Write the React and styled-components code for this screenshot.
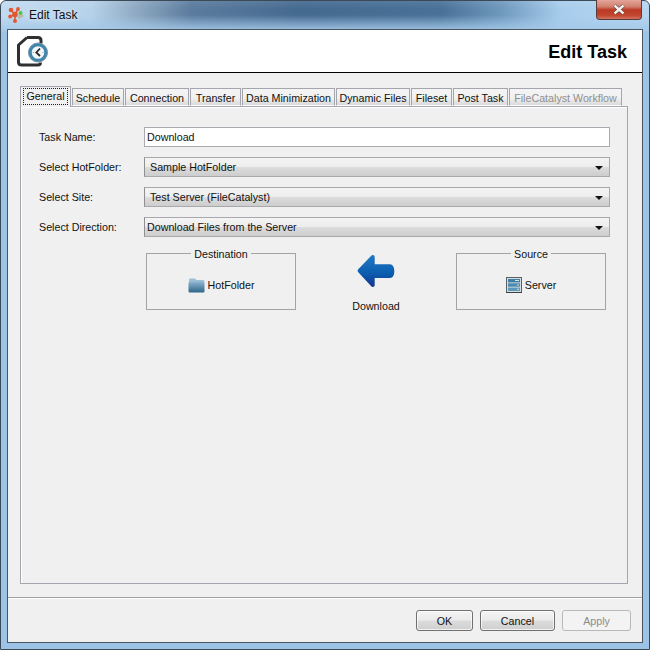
import React from "react";
import styled, { createGlobalStyle } from "styled-components";

const Global = createGlobalStyle`
  html, body { margin: 0; padding: 0; background: #fff; }
  #root { width: 650px; height: 650px; overflow: hidden; }
  * { box-sizing: border-box; }
`;

const UI = `"Liberation Sans", Arial, sans-serif`;

const Win = styled.div`
  width: 650px; height: 650px;
  display: flex; flex-direction: column;
  padding: 0 6px 6px;
  border-radius: 6px 6px 0 0;
  border: 1px solid #3c4a58;
  background:
    linear-gradient(180deg, rgba(255,255,255,0.08) 0, rgba(255,255,255,0) 8px, rgba(170,205,235,0) 14px, rgba(164,201,233,0.9) 29px, #9dc3e6 32px),
    linear-gradient(90deg, #c3dbf0 0, #b6d2ea 90px, #8fa9c2 135px, #5b7c9e 190px, #456a90 300px, #4a7198 440px, #6f98bd 500px, #a8cdec 560px, #b6d6f0 100%);
  font-family: ${UI};
  font-size: 10.7px;
  color: #111;
`;

const TitleBar = styled.div`
  height: 28px; flex: none;
  display: flex; align-items: flex-start;
  margin-left: 1px;
`;
const AppIcon = styled.svg`width: 16px; height: 16px; margin-top: 6px; flex: none;`;
const TitleText = styled.div`
  margin: 6px 0 0 5px; font-size: 12px; line-height: 17px; color: #111;
  text-shadow: 0 0 6px rgba(255,255,255,0.8);
`;
const CloseBtn = styled.div`
  margin-left: auto; margin-right: 1px; margin-top: -1px;
  width: 46px; height: 20px;
  border: 1px solid #5a3a3a; border-top: 0; border-radius: 0 0 4px 4px;
  background: linear-gradient(180deg, #e2a69a 0, #d2806f 35%, #bb3a24 52%, #c2452d 80%, #d2745f 100%);
  display: flex; align-items: center; justify-content: center;
`;

const Client = styled.div`
  flex: 1; min-height: 0; display: flex; flex-direction: column;
  background: #f0f0f0; border: 1px solid #4b5560;
`;
const Header = styled.div`
  height: 43px; flex: none; background: #fff;
  border-bottom: 1px solid #000;
  display: flex; align-items: center; justify-content: space-between;
  padding: 0 15px 0 8px;
`;
const HeaderTitle = styled.div`
  font-weight: 700; font-size: 18px; color: #000; margin-top: 2px;
`;

const Body = styled.div`
  flex: 1; min-height: 0; display: flex; flex-direction: column;
  padding: 13px 14px 13px 12px;
`;
const TabBar = styled.div`
  display: flex; align-items: flex-end; height: 20px; flex: none;
  position: relative; z-index: 1;
`;
const Tab = styled.div`
  width: ${p => p.$w}px; height: ${p => (p.$active ? 21 : 18)}px;
  margin-right: 1px;
  margin-bottom: ${p => (p.$active ? -1 : 0)}px;
  border: 1px solid #a5a5ad; border-bottom: ${p => (p.$active ? "0" : "1px solid #fff")};
  background: ${p => (p.$active ? "#f0f0f0" : "linear-gradient(180deg,#f4f4f4 0,#f1f1f1 55%,#d9d9d9 100%)")};
  color: ${p => (p.$disabled ? "#8f8f8f" : "#111")};
  display: flex; align-items: ${p => (p.$active ? "flex-start" : "center")}; justify-content: center;
  white-space: nowrap; line-height: 14px;
  padding-top: ${p => (p.$active ? 2 : 1)}px;
`;
const FocusRing = styled.span`
  border: 1px dotted #222; padding: 0 2px 1px; line-height: 14px; margin-top: -1px;
`;
const Panel = styled.div`
  flex: 1; min-height: 0; background: #f0f0f0;
  border: 1px solid #a5a5ad;
  box-shadow: inset 1px 1px 0 #fff;
  padding: 20px 17px 0 18px;
  display: flex; flex-direction: column; gap: 10px;
`;
const Row = styled.div`display: flex; align-items: center; height: 20px;`;
const Label = styled.div`width: 105px; flex: none;`;
const TextInput = styled.div`
  flex: 1; height: 20px; background: #fff; border: 1px solid #a9a9b0;
  padding-left: 2px; line-height: 18px;
`;
const Select = styled.div`
  flex: 1; height: 20px; border: 1px solid #a9a9ad; border-left-color: #8f8f8f;
  background: linear-gradient(180deg, #f4f4f4 0, #ededed 48%, #dcdcdc 52%, #cdcdcd 100%);
  display: flex; align-items: center; justify-content: space-between;
  padding: 0 6px 0 ${p => p.$pad ?? 5}px;
`;
const Caret = styled.div`
  width: 0; height: 0; border-left: 4px solid transparent; border-right: 4px solid transparent;
  border-top: 4px solid #111; margin-top: 1px;
`;
const Transfer = styled.div`
  display: grid; grid-template-columns: 150px 160px 150px; margin: 0 0 0 107px;
  height: 64px;
`;
const Group = styled.fieldset`
  margin: 0; padding: 0 0 1px; min-width: 0; height: 63px;
  border: 1px solid #a4a4a4;
`;
const Legend = styled.legend`
  margin: 0 auto; padding: 0 3px; line-height: 13px; font-size: 10.7px;
  transform: translateY(1px);
`;
const GroupContent = styled.div`display: flex; align-items: center; justify-content: center; gap: 3px; height: 50px;`;
const Direction = styled.div`
  display: flex; flex-direction: column; align-items: center; padding-top: 7px;
`;
const DirLabel = styled.div`margin-top: 11px; line-height: 14px;`;

const Footer = styled.div`
  height: 45px; flex: none; border-top: 1px solid #a0a0a0;
  box-shadow: inset 0 1px 0 #fff;
  display: flex; align-items: flex-start; justify-content: flex-end; gap: 7px;
  padding: 12px 11px 0 0;
`;
const Btn = styled.div`
  width: ${p => p.$w}px; height: 21px; border-radius: 3px;
  border: 1px solid ${p => (p.$disabled ? "#b9b9b9" : "#707070")};
  background: ${p => (p.$disabled ? "#f3f3f3" : "linear-gradient(180deg,#f3f3f3 0,#ebebeb 48%,#dcdcdc 52%,#cfcfcf 100%)")};
  color: ${p => (p.$disabled ? "#8c8c8c" : "#111")};
  display: flex; align-items: center; justify-content: center;
  box-shadow: ${p => (p.$disabled ? "none" : "inset 0 0 0 1px rgba(255,255,255,0.7)")};
`;

const Logo = () => (
  <AppIcon viewBox="0 0 16 16">
    <g fill="#e4572e">
      <circle cx="3" cy="3" r="2.300"/><circle cx="10" cy="2" r="1.900"/><circle cx="2.200" cy="9.500" r="2"/>
      <circle cx="7" cy="14" r="2"/><circle cx="7" cy="7.5" r="2.800"/>
    </g>
    <path d="M3 3l4 4.500M10 2L7 7.500M2 9.500l5-2M7 14V7.500" stroke="#e4572e" strokeWidth="1.600"/>
    <path d="M9 9l5-2 2 2-5 3z" fill="#b9b9a8"/>
    <circle cx="12.500" cy="6" r="2" fill="#58c23c"/>
  </AppIcon>
);

const DocClock = () => (
  <svg width="33" height="33" viewBox="0 0 33 33">
    <path d="M11 2.500H22c2 0 3 1 3 3v3M11 2.500L2.500 10V27c0 2 1 3 3 3H22c1.500 0 2.500-.8 2.500-2.500" fill="none" stroke="#303030" strokeWidth="3" strokeLinejoin="round"/>
    <circle cx="22" cy="17.500" r="9.500" fill="#3f86ad"/>
    <circle cx="22" cy="17.500" r="9.500" fill="none" stroke="#6f8fa3" strokeWidth="1"/>
    <circle cx="22" cy="17.500" r="6.300" fill="#f2f6f9"/>
    <path d="M24 13.500L20.300 17.500L24 21" fill="none" stroke="#2a2a2a" strokeWidth="1.800"/>
    <path d="M16.800 17.500h1M26.500 17.500h1" stroke="#7a9cb2" strokeWidth="1"/>
  </svg>
);

const Folder = () => (
  <svg width="17" height="16" viewBox="0 0 17 16">
    <defs>
      <linearGradient id="fg" x1="0" y1="0" x2="0" y2="1">
        <stop offset="0" stopColor="#8fb7d2"/><stop offset="1" stopColor="#2f6488"/>
      </linearGradient>
    </defs>
    <path d="M1 3c0-1 .5-1.500 1.500-1.500H7l1.500 1.500H15c.8 0 1.300.5 1.300 1.300V6H1z" fill="#9dbfd6"/>
    <path d="M.5 6.500C.5 5 1.500 4.500 2.500 4.500h12c1.300 0 2 .7 2 2V14c0 1-.5 1.500-1.500 1.500H2c-1 0-1.500-.5-1.500-1.500z" fill="url(#fg)"/>
  </svg>
);

const Server = () => (
  <svg width="16" height="16" viewBox="0 0 16 16">
    <rect x="0.500" y="0.500" width="15" height="15" fill="#d8dde0" stroke="#5a5f63"/>
    <rect x="2" y="2" width="12" height="3.400" fill="#3f7ea3"/>
    <rect x="2" y="6.300" width="12" height="3.400" fill="#4b8bb0"/>
    <rect x="2" y="10.600" width="12" height="3.400" fill="#5a98bc"/>
    <path d="M9 3.500h4M11 8h2M11 12.300h2" stroke="#cfe2ee" strokeWidth="1"/>
    <rect x="0" y="15" width="16" height="1" fill="#3a3f43"/>
  </svg>
);

const Arrow = () => (
  <svg width="38" height="34" viewBox="0 0 38 34">
    <defs>
      <linearGradient id="ag" x1="0" y1="0" x2="0" y2="1">
        <stop offset="0" stopColor="#1f78c4"/><stop offset="0.55" stopColor="#0c5fb0"/><stop offset="1" stopColor="#17348c"/>
      </linearGradient>
    </defs>
    <path d="M1 15.500C.6 16.500.6 17.500 1.300 18.300L14 32c1.500 1.600 3.700 1 3.700-1.300V24H33c2.700 0 4.300-2.700 4.300-6.700 0-4-1.600-7-4.300-7H17.700V3.200C17.700 1 15.500.4 14 2z" fill="url(#ag)"/>
  </svg>
);

const tabs = [
  ["Schedule", 52], ["Connection", 64], ["Transfer", 51], ["Data Minimization", 93], ["Dynamic Files", 74],
  ["Fileset", 41], ["Post Task", 55],
];

export default function App() {
  return (
    <>
      <Global />
      <Win>
        <TitleBar>
          <Logo />
          <TitleText>Edit Task</TitleText>
          <CloseBtn>
            <svg width="14" height="11" viewBox="0 0 14 11">
              <path d="M2.500 1.500L11.500 9.500M11.500 1.500L2.500 9.500" stroke="#4a3030" strokeWidth="3.600"/>
              <path d="M2.500 1.500L11.500 9.500M11.500 1.500L2.500 9.500" stroke="#f3f1ee" strokeWidth="2.400"/>
            </svg>
          </CloseBtn>
        </TitleBar>
        <Client>
          <Header>
            <DocClock />
            <HeaderTitle>Edit Task</HeaderTitle>
          </Header>
          <Body>
            <TabBar>
              <Tab $active $w={51}><FocusRing>General</FocusRing></Tab>
              {tabs.map(([t, w]) => <Tab key={t} $w={w}>{t}</Tab>)}
              <Tab $w={113} $disabled>FileCatalyst Workflow</Tab>
            </TabBar>
            <Panel>
              <Row><Label>Task Name:</Label><TextInput>Download</TextInput></Row>
              <Row><Label>Select HotFolder:</Label><Select>Sample HotFolder<Caret /></Select></Row>
              <Row><Label>Select Site:</Label><Select>Test Server (FileCatalyst)<Caret /></Select></Row>
              <Row><Label>Select Direction:</Label><Select $pad={2}>Download Files from the Server<Caret /></Select></Row>
              <Transfer>
                <Group>
                  <Legend>Destination</Legend>
                  <GroupContent><Folder />HotFolder</GroupContent>
                </Group>
                <Direction>
                  <Arrow />
                  <DirLabel>Download</DirLabel>
                </Direction>
                <Group>
                  <Legend>Source</Legend>
                  <GroupContent><Server />Server</GroupContent>
                </Group>
              </Transfer>
            </Panel>
          </Body>
          <Footer>
            <Btn $w={57}>OK</Btn>
            <Btn $w={75}>Cancel</Btn>
            <Btn $w={69} $disabled>Apply</Btn>
          </Footer>
        </Client>
      </Win>
    </>
  );
}
